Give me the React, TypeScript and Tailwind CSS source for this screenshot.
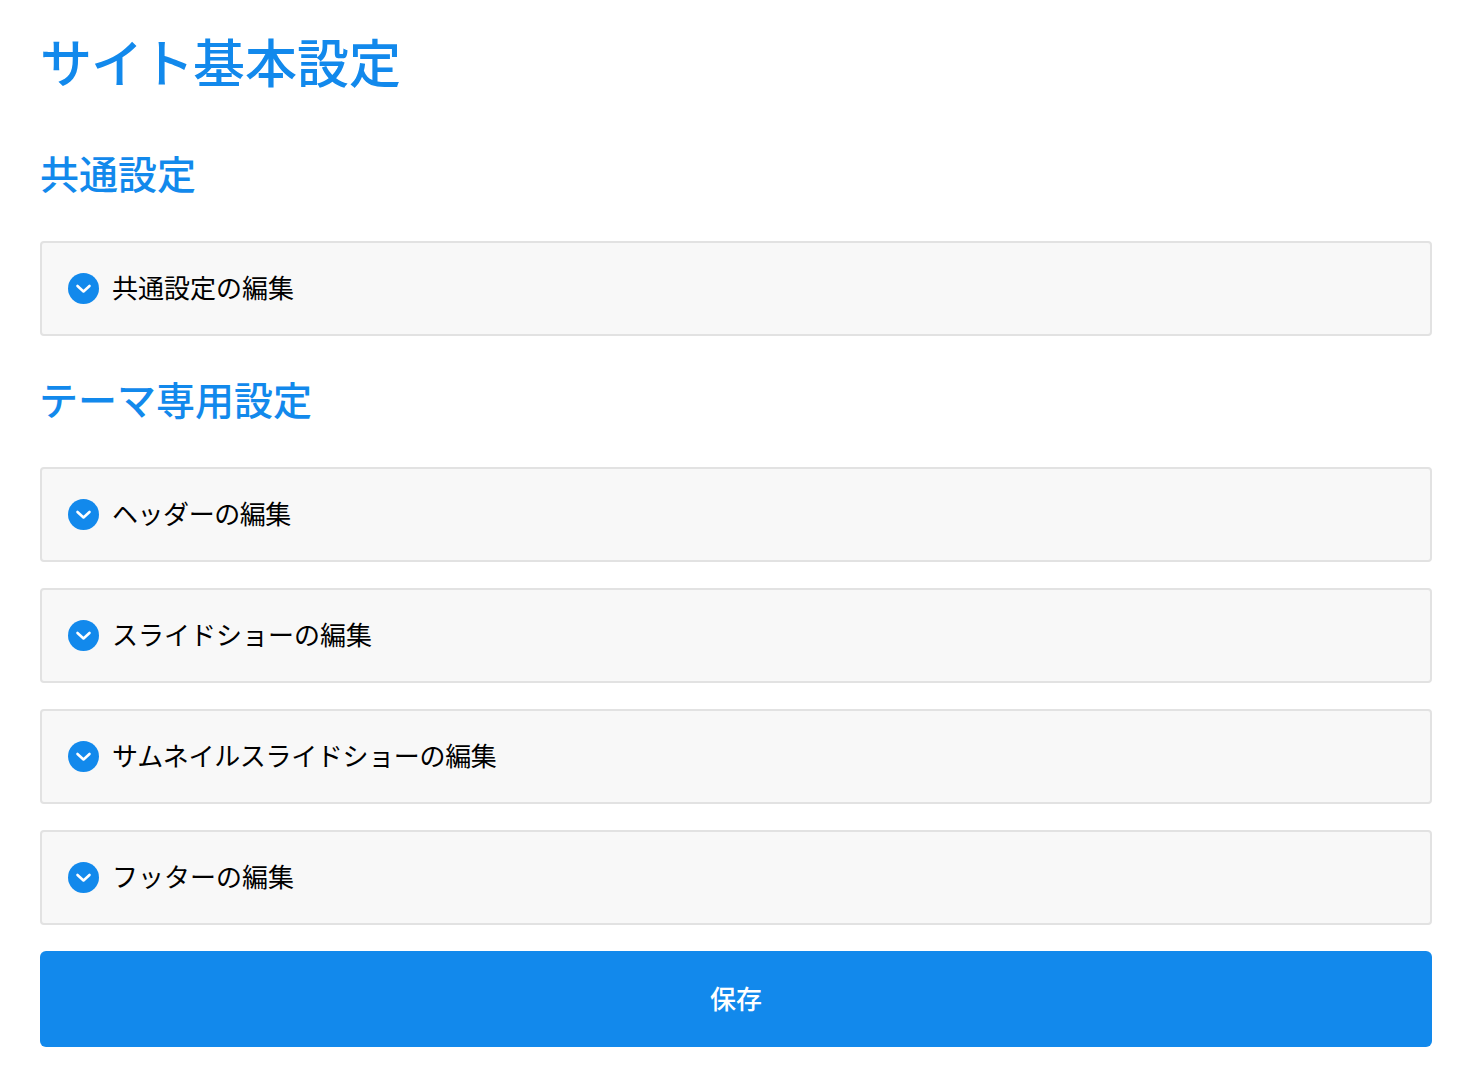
const font = { fontFamily: '"Noto Sans CJK JP", "Liberation Sans", sans-serif' };

function Row({ label, tracking = "" }: { label: string; tracking?: string }) {
  return (
    <div className="flex h-[95px] items-center gap-[13px] rounded-[4px] border-2 border-[#e2e2e2] bg-[#f8f8f8] pl-[26px]">
      <span className="flex h-[31px] w-[31px] items-center justify-center rounded-full bg-[#1289ec]">
        <svg width="17" height="17" viewBox="0 0 17 17" fill="none">
          <path d="M2.5 6 8.5 11.5 14.5 6" stroke="#fff" strokeWidth="2.6" strokeLinecap="round" strokeLinejoin="round" />
        </svg>
      </span>
      <span className={`mb-[4px] text-[26px] leading-[39px] text-black ${tracking}`}>{label}</span>
    </div>
  );
}

export default function App() {
  return (
    <div className="min-h-[1092px] bg-white pl-10 pr-[44px]" style={font}>
      <h1 className="pt-[22px] text-[52px] font-medium leading-[78px] text-[#1289ec]">
        <span className="tracking-[-1px]">サイト</span>基本設定
      </h1>
      <h2 className="mt-[43px] text-[39px] font-medium leading-[58px] text-[#1289ec]">共通設定</h2>
      <div className="mt-[40px]">
        <Row label="共通設定の編集" />
      </div>
      <h2 className="-ml-[1px] mt-[33px] text-[39px] font-medium leading-[58px] text-[#1289ec]">テーマ専用設定</h2>
      <div className="mt-[40px] flex flex-col gap-[26px]">
        <Row label="ヘッダーの編集" tracking="tracking-[-0.45px]" />
        <Row label="スライドショーの編集" />
        <Row label="サムネイルスライドショーの編集" tracking="tracking-[-0.33px]" />
        <Row label="フッターの編集" />
        <button className="h-[96px] rounded-[6px] bg-[#1289ec] pb-[4px] text-[26px] font-medium text-white">保存</button>
      </div>
    </div>
  );
}
